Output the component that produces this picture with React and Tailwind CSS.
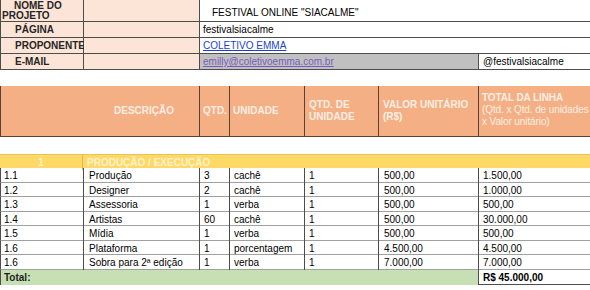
import React from 'react';

const rows = [
  { n: '1.1', desc: 'Produção', qtd: '3', un: 'cachê', qu: '1', vu: '500,00', tot: '1.500,00', h: 'h-[15px]' },
  { n: '1.2', desc: 'Designer', qtd: '2', un: 'cachê', qu: '1', vu: '500,00', tot: '1.000,00', h: 'h-[14px]' },
  { n: '1.3', desc: 'Assessoria', qtd: '1', un: 'verba', qu: '1', vu: '500,00', tot: '500,00', h: 'h-[15px]' },
  { n: '1.4', desc: 'Artistas', qtd: '60', un: 'cachê', qu: '1', vu: '500,00', tot: '30.000,00', h: 'h-[14px]' },
  { n: '1.5', desc: 'Mídia', qtd: '1', un: 'verba', qu: '1', vu: '500,00', tot: '500,00', h: 'h-[15px]' },
  { n: '1.6', desc: 'Plataforma', qtd: '1', un: 'porcentagem', qu: '1', vu: '4.500,00', tot: '4.500,00', h: 'h-[14px]' },
  { n: '1.6', desc: 'Sobra para 2ª edição', qtd: '1', un: 'verba', qu: '1', vu: '7.000,00', tot: '7.000,00', h: 'h-[15px]' },
];

const cols = 'grid grid-cols-[83px_116px_30px_75px_74px_100px_112px]';

export default function App() {
  return (
    <div className="w-[590px] h-[290px] overflow-hidden bg-white text-[10px] text-black font-['Liberation_Sans',Arial,sans-serif]">
      {/* Cabeçalho do projeto */}
      <div className="grid grid-cols-[83px_116px_279px_112px] border-l border-[#4d4d4d]">
        <div className="h-[22px] bg-[#fce4d6] border-r border-b border-[#4d4d4d] font-bold text-[#262626] leading-[10px] pt-[1px]">
          <span className="block pl-[13px]">NOME DO</span>
          <span className="block pl-[1px]">PROJETO</span>
        </div>
        <div className="bg-[#fce4d6] border-r border-b border-[#4d4d4d]"></div>
        <div className="col-span-2 border-b border-[#4d4d4d] flex items-center pl-[12px] pt-[3px]">FESTIVAL ONLINE "SIACALME"</div>

        <div className="h-[16px] bg-[#fce4d6] border-r border-b border-[#4d4d4d] font-bold text-[#262626] flex items-center pl-[14px]">PÁGINA</div>
        <div className="bg-[#fce4d6] border-r border-b border-[#4d4d4d]"></div>
        <div className="col-span-2 border-b border-[#4d4d4d] flex items-center pl-[3px]">festivalsiacalme</div>

        <div className="h-[16px] bg-[#fce4d6] border-r border-b border-[#4d4d4d] font-bold text-[#262626] flex items-center pl-[14px]">PROPONENTE</div>
        <div className="bg-[#fce4d6] border-r border-b border-[#4d4d4d]"></div>
        <div className="col-span-2 border-b border-[#4d4d4d] flex items-center pl-[3px]">
          <span className="text-[#1a3fcc] underline">COLETIVO EMMA</span>
        </div>

        <div className="h-[16px] bg-[#fce4d6] border-r border-b border-[#4d4d4d] font-bold text-[#262626] flex items-center pl-[14px]">E-MAIL</div>
        <div className="bg-[#fce4d6] border-r border-b border-[#4d4d4d]"></div>
        <div className="bg-[#c0c0c0] border-r border-b border-[#4d4d4d] flex items-center pl-[3px]">
          <span className="text-[#7a5cc0] underline">emilly@coletivoemma.com.br</span>
        </div>
        <div className="border-b border-[#4d4d4d] flex items-center pl-[4px]">@festivalsiacalme</div>
      </div>

      {/* Cabeçalho da tabela */}
      <div className={`${cols} mt-[16px] h-[51px] bg-[#f4b084] border-l border-b border-[#5c4033] font-bold text-[#fdeee4] leading-[12px]`}>
        <div className="col-span-2 border-r border-[#5c4033] flex items-center pl-[113px]">DESCRIÇÃO</div>
        <div className="border-r border-[#5c4033] flex items-center pl-[3px]">QTD.</div>
        <div className="border-r border-[#5c4033] flex items-center pl-[3px]">UNIDADE</div>
        <div className="border-r border-[#5c4033] flex items-center pl-[4px]">QTD. DE<br />UNIDADE</div>
        <div className="border-r border-[#5c4033] flex items-center pl-[4px]">VALOR UNITÁRIO<br />(R$)</div>
        <div className="flex flex-col justify-center pl-[3px] pb-[3px] whitespace-nowrap tracking-[-0.1px]">
          <span>TOTAL DA LINHA</span>
          <span className="font-normal">(Qtd. x Qtd. de unidades</span>
          <span className="font-normal">x Valor unitário)</span>
        </div>
      </div>

      {/* Seção 1 */}
      <div className="mt-[17px] grid grid-cols-[83px_507px] h-[14px] bg-[#ffd966] border-t border-[#e6c25a] font-bold text-[#fff2cc]">
        <div className="border-r border-[#e0b84a] flex items-center justify-center">1</div>
        <div className="flex items-center pl-[4px]">PRODUÇÃO / EXECUÇÃO</div>
      </div>

      {rows.map((r, i) => (
        <div key={i} className={`${cols} ${r.h} border-l border-b border-l-[#4d4d4d] border-b-[#a0a0a0]`}>
          <div className="border-r border-[#4d4d4d] flex items-center pl-[3px]">{r.n}</div>
          <div className="border-r border-[#4d4d4d] flex items-center pl-[5px]">{r.desc}</div>
          <div className="border-r border-[#4d4d4d] flex items-center pl-[4px]">{r.qtd}</div>
          <div className="border-r border-[#4d4d4d] flex items-center pl-[4px]">{r.un}</div>
          <div className="border-r border-[#4d4d4d] flex items-center pl-[4px]">{r.qu}</div>
          <div className="border-r border-[#4d4d4d] flex items-center pl-[5px]">{r.vu}</div>
          <div className="flex items-center pl-[4px]">{r.tot}</div>
        </div>
      ))}

      {/* Total */}
      <div className="grid grid-cols-[478px_112px] h-[15px] border-l border-b border-[#4d4d4d] font-bold">
        <div className="bg-[#c6e0b4] border-r border-[#4d4d4d] flex items-center pl-[3px] text-[#1f1f1f]">Total:</div>
        <div className="flex items-center pl-[4px]">R$ 45.000,00</div>
      </div>
    </div>
  );
}
